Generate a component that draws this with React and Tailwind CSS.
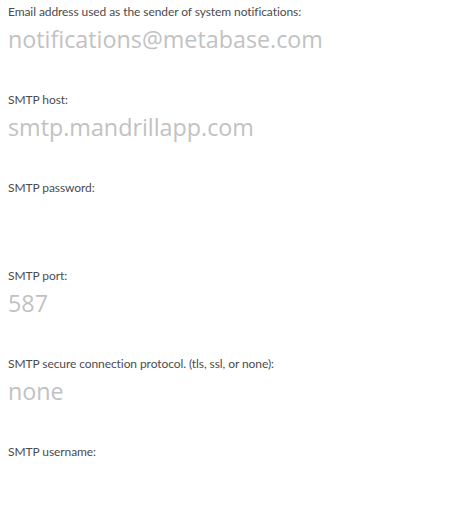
const FIELDS = [
  { label: 'Email address used as the sender of system notifications:', placeholder: 'notifications@metabase.com' },
  { label: 'SMTP host:', placeholder: 'smtp.mandrillapp.com' },
  { label: 'SMTP password:', placeholder: '' },
  { label: 'SMTP port:', placeholder: '587' },
  { label: 'SMTP secure connection protocol. (tls, ssl, or none):', placeholder: 'none' },
  { label: 'SMTP username:', placeholder: '' },
]

export default function App() {
  return (
    <div className="bg-white w-[451px] h-[512px] overflow-hidden px-2 pt-[4px]">
      {FIELDS.map((f) => (
        <div key={f.label} className="h-[88px]">
          <label className="block text-[12px] leading-[15px] text-[#4c4c4c] font-['Lato',sans-serif] tracking-[-0.08px]">
            {f.label}
          </label>
          <input
            type="text"
            placeholder={f.placeholder}
            className="block w-full mt-[4px] p-0 text-[23.3px] leading-[33px] font-['Open_Sans',sans-serif] text-[#4c4c4c] placeholder:text-[#c2c2c2] outline-none bg-transparent"
          />
        </div>
      ))}
    </div>
  )
}
